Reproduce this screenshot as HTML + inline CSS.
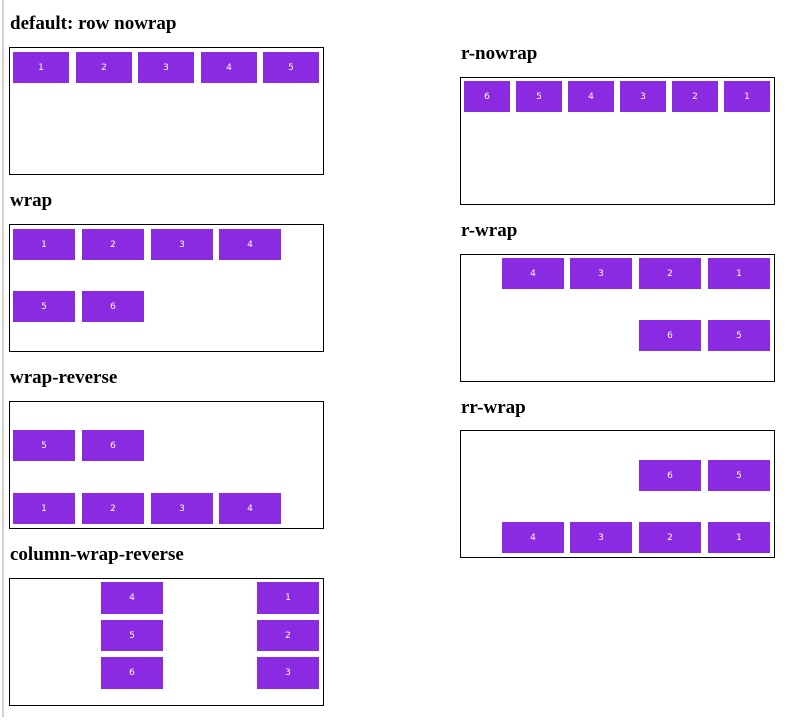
<!DOCTYPE html>
<html><head><style>
body{margin:0;width:801px;height:727px;background:#fff;position:relative;overflow:hidden;font-family:"Liberation Serif",serif}
.vl{position:absolute;left:2px;top:0;width:2px;height:717px;background:#d0d0d0}
h2{position:absolute;margin:0;font-size:19px;font-weight:bold;line-height:22px}
.b{position:absolute;border:1px solid #000;width:313px;height:126px;box-sizing:content-box}
.i{position:absolute;background:#8a2be2;color:#fff;font-family:"DejaVu Sans",sans-serif;font-size:9px;display:flex;align-items:center;justify-content:center;height:31px;width:62px}
</style></head><body>
<div class="vl"></div>
<h2 style="left:10px;top:13px">default: row nowrap</h2>
<div class="b" style="left:9px;top:47px"></div>
<div class="i" style="left:13px;top:52px;width:56px">1</div>
<div class="i" style="left:76px;top:52px;width:56px">2</div>
<div class="i" style="left:138px;top:52px;width:56px">3</div>
<div class="i" style="left:201px;top:52px;width:56px">4</div>
<div class="i" style="left:263px;top:52px;width:56px">5</div>

<h2 style="left:10px;top:190px">wrap</h2>
<div class="b" style="left:9px;top:224px"></div>
<div class="i" style="left:13px;top:229px">1</div>
<div class="i" style="left:82px;top:229px">2</div>
<div class="i" style="left:151px;top:229px">3</div>
<div class="i" style="left:219px;top:229px">4</div>
<div class="i" style="left:13px;top:291px">5</div>
<div class="i" style="left:82px;top:291px">6</div>

<h2 style="left:10px;top:367px">wrap-reverse</h2>
<div class="b" style="left:9px;top:401px"></div>
<div class="i" style="left:13px;top:430px">5</div>
<div class="i" style="left:82px;top:430px">6</div>
<div class="i" style="left:13px;top:493px">1</div>
<div class="i" style="left:82px;top:493px">2</div>
<div class="i" style="left:151px;top:493px">3</div>
<div class="i" style="left:219px;top:493px">4</div>

<h2 style="left:10px;top:544px">column-wrap-reverse</h2>
<div class="b" style="left:9px;top:578px"></div>
<div class="i" style="left:101px;top:582px;height:32px">4</div>
<div class="i" style="left:101px;top:620px">5</div>
<div class="i" style="left:101px;top:657px;height:32px">6</div>
<div class="i" style="left:257px;top:582px;height:32px">1</div>
<div class="i" style="left:257px;top:620px">2</div>
<div class="i" style="left:257px;top:657px;height:32px">3</div>

<h2 style="left:461px;top:43px">r-nowrap</h2>
<div class="b" style="left:460px;top:77px"></div>
<div class="i" style="left:464px;top:81px;width:46px">6</div>
<div class="i" style="left:516px;top:81px;width:46px">5</div>
<div class="i" style="left:568px;top:81px;width:46px">4</div>
<div class="i" style="left:620px;top:81px;width:46px">3</div>
<div class="i" style="left:672px;top:81px;width:46px">2</div>
<div class="i" style="left:724px;top:81px;width:46px">1</div>

<h2 style="left:461px;top:220px">r-wrap</h2>
<div class="b" style="left:460px;top:254px"></div>
<div class="i" style="left:502px;top:258px">4</div>
<div class="i" style="left:570px;top:258px">3</div>
<div class="i" style="left:639px;top:258px">2</div>
<div class="i" style="left:708px;top:258px">1</div>
<div class="i" style="left:639px;top:320px">6</div>
<div class="i" style="left:708px;top:320px">5</div>

<h2 style="left:461px;top:397px">rr-wrap</h2>
<div class="b" style="left:460px;top:430px"></div>
<div class="i" style="left:639px;top:460px">6</div>
<div class="i" style="left:708px;top:460px">5</div>
<div class="i" style="left:502px;top:522px">4</div>
<div class="i" style="left:570px;top:522px">3</div>
<div class="i" style="left:639px;top:522px">2</div>
<div class="i" style="left:708px;top:522px">1</div>
</body></html>
